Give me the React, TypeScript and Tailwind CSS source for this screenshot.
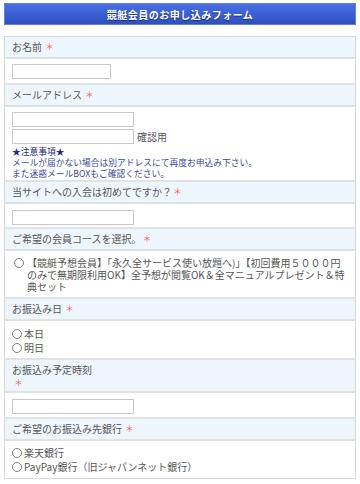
import React from "react";

const font = { fontFamily: '"Noto Sans CJK JP", "Noto Sans", sans-serif' };

function Star({ ml = "ml-[3px]" }: { ml?: string }) {
  return <span className={`text-[#ff6060] text-[9px] ${ml}`}>＊</span>;
}

function Label({ children }: { children: React.ReactNode }) {
  return (
    <div className="h-[22px] flex items-center bg-[#eef6fd] border-b-2 border-[#dfe3e6] px-[7px] text-[10px] text-[#555] leading-[12px]">
      {children}
    </div>
  );
}

function Input({ w }: { w: string }) {
  return <div className={`${w} h-[15px] border border-[#c8c8c8] bg-white`} />;
}

function Radio() {
  return (
    <span className="inline-block w-[10px] h-[10px] rounded-full border border-[#808080] shrink-0" />
  );
}

export default function App() {
  return (
    <div className="w-[360px] h-[484px] bg-white pt-[3px] px-[4px]" style={font}>
      <div className="h-[22px] bg-gradient-to-b from-[#4a70e4] to-[#2e4fc2] border border-[#5d82e0] flex items-center justify-center text-white font-bold text-[10px] tracking-[0.5px] [text-shadow:0_1px_1px_rgba(0,0,0,0.5)]">
        競艇会員のお申し込みフォーム
      </div>
      <div className="mt-[11px] border border-[#d8d8d8] text-[#555]">
        <Label>
          お名前<Star />
        </Label>
        <div className="h-[26px] px-[7px] pt-[5px] border-b-2 border-[#dfe3e6]">
          <Input w="w-[99px]" />
        </div>

        <Label>
          メールアドレス<Star />
        </Label>
        <div className="h-[75px] px-[7px] pt-[5px] border-b-2 border-[#dfe3e6]">
          <Input w="w-[122px]" />
          <div className="mt-[2px] h-[15px] flex items-center">
            <Input w="w-[122px]" />
            <span className="ml-[3px] text-[10px] leading-[12px]">確認用</span>
          </div>
          <div className="mt-[2px] text-[8.75px] leading-[11px] text-[#3a4aa0]">
            <div className="text-[#1c2c7c]">★注意事項★</div>
            <div>メールが届かない場合は別アドレスにて再度お申込み下さい。</div>
            <div>また迷惑メールBOXもご確認ください。</div>
          </div>
        </div>

        <Label>
          当サイトへの入会は初めてですか？<Star ml="ml-[1px]" />
        </Label>
        <div className="h-[25px] px-[7px] pt-[6px] border-b-2 border-[#dfe3e6]">
          <Input w="w-[122px]" />
        </div>

        <Label>
          ご希望の会員コースを選択。<Star ml="ml-[1px]" />
        </Label>
        <div className="h-[48px] px-[9px] pt-[6px] border-b-2 border-[#dfe3e6] flex gap-[3px] text-[10px] leading-[12px]">
          <span className="mt-[1px]"><Radio /></span>
          <span>
            【競艇予想会員】「永久全サービス使い放題へ)」【初回費用５０００円のみで無期限利用OK】全予想が閲覧OK＆全マニュアルプレゼント＆特典セット
          </span>
        </div>

        <Label>
          お振込み日<Star />
        </Label>
        <div className="h-[39px] px-[7px] pt-[6px] border-b-2 border-[#dfe3e6] text-[10px] leading-[14px]">
          <div className="flex items-center gap-[2px]"><Radio />本日</div>
          <div className="flex items-center gap-[2px]"><Radio />明日</div>
        </div>

        <div className="h-[33px] bg-[#eef6fd] border-b-2 border-[#dfe3e6] px-[7px] pt-[4px] text-[10px] text-[#555] leading-[12px]">
          <div>お振込み予定時刻</div>
          <div><Star ml="ml-[2px]" /></div>
        </div>
        <div className="h-[26px] px-[7px] pt-[6px] border-b-2 border-[#dfe3e6]">
          <Input w="w-[122px]" />
        </div>

        <Label>
          ご希望のお振込み先銀行<Star />
        </Label>
        <div className="h-[37px] px-[7px] pt-[5px] text-[10px] leading-[14px]">
          <div className="flex items-center gap-[2px]"><Radio />楽天銀行</div>
          <div className="flex items-center gap-[2px]"><Radio />PayPay銀行（旧ジャパンネット銀行）</div>
        </div>
      </div>
    </div>
  );
}
